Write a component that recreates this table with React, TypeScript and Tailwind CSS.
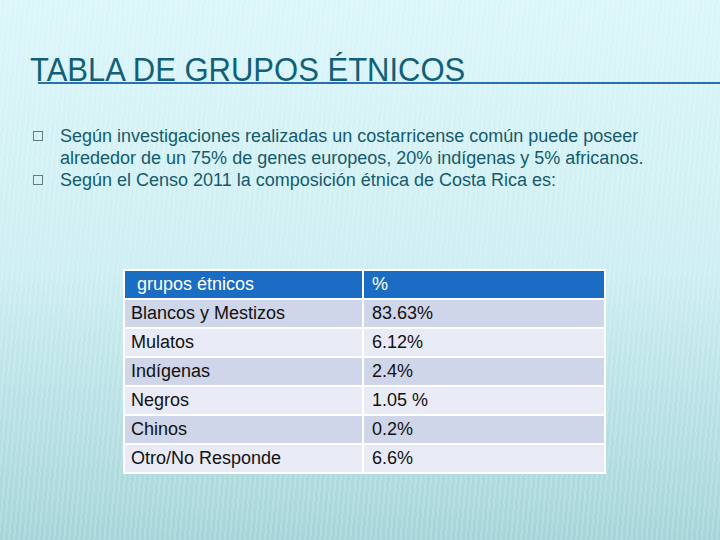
const rows = [
  ["Blancos y Mestizos", "83.63%"],
  ["Mulatos", "6.12%"],
  ["Indígenas", "2.4%"],
  ["Negros", "1.05 %"],
  ["Chinos", "0.2%"],
  ["Otro/No Responde", "6.6%"],
];

const Bullet = () => (
  <span className="mt-[6px] ml-[33px] mr-[17px] block h-[10px] w-[10px] shrink-0 border border-[#6a7a80]" />
);

export default function App() {
  return (
    <div className="relative h-[540px] w-[720px] overflow-hidden bg-gradient-to-b from-[#dbf6fa] via-[#cdeef2] to-[#a5d5d9] font-['Liberation_Sans',Arial,sans-serif]">
      <div className="absolute inset-0 bg-[repeating-linear-gradient(95deg,rgba(255,255,255,0.22)_0px,rgba(255,255,255,0.22)_2px,transparent_2px,transparent_5px)] opacity-70" />
      <div className="relative">
        <div className="ml-[38px] mt-[60px] border-b-2 border-[#2d6fae]">
          <h1 className="-ml-[8px] origin-bottom scale-y-[1.1] text-[31px] font-normal leading-[22px] text-[#125f78]">
            TABLA DE GRUPOS ÉTNICOS
          </h1>
        </div>

        <ul className="mt-[41px] text-[18px] leading-[22px] text-[#155a6c]">
          <li className="flex">
            <Bullet />
            <span className="w-[600px]">
              Según investigaciones realizadas un costarricense común puede poseer alrededor de un 75% de genes europeos, 20% indígenas y 5% africanos.
            </span>
          </li>
          <li className="flex">
            <Bullet />
            <span>Según el Censo 2011 la composición étnica de Costa Rica es:</span>
          </li>
        </ul>

        <div className="ml-[123px] mt-[78px] w-[483px] bg-white p-[2px]">
          <div className="grid grid-cols-[237px_240px] gap-[2px] text-[18px] text-[#111]">
            <div className="flex h-[27px] items-center bg-[#1b6cc3] pl-[12px] text-white">grupos étnicos</div>
            <div className="flex h-[27px] items-center bg-[#1b6cc3] pl-[8px] text-white">%</div>
            {rows.map(([name, pct], i) => (
              <div key={name} className="contents">
                <div className={`flex h-[27px] items-center pl-[6px] ${i % 2 === 0 ? "bg-[#cfd6e9]" : "bg-[#e8ebf5]"}`}>
                  {name}
                </div>
                <div className={`flex h-[27px] items-center pl-[8px] ${i % 2 === 0 ? "bg-[#cfd6e9]" : "bg-[#e8ebf5]"}`}>
                  {pct}
                </div>
              </div>
            ))}
          </div>
        </div>
      </div>
    </div>
  );
}
